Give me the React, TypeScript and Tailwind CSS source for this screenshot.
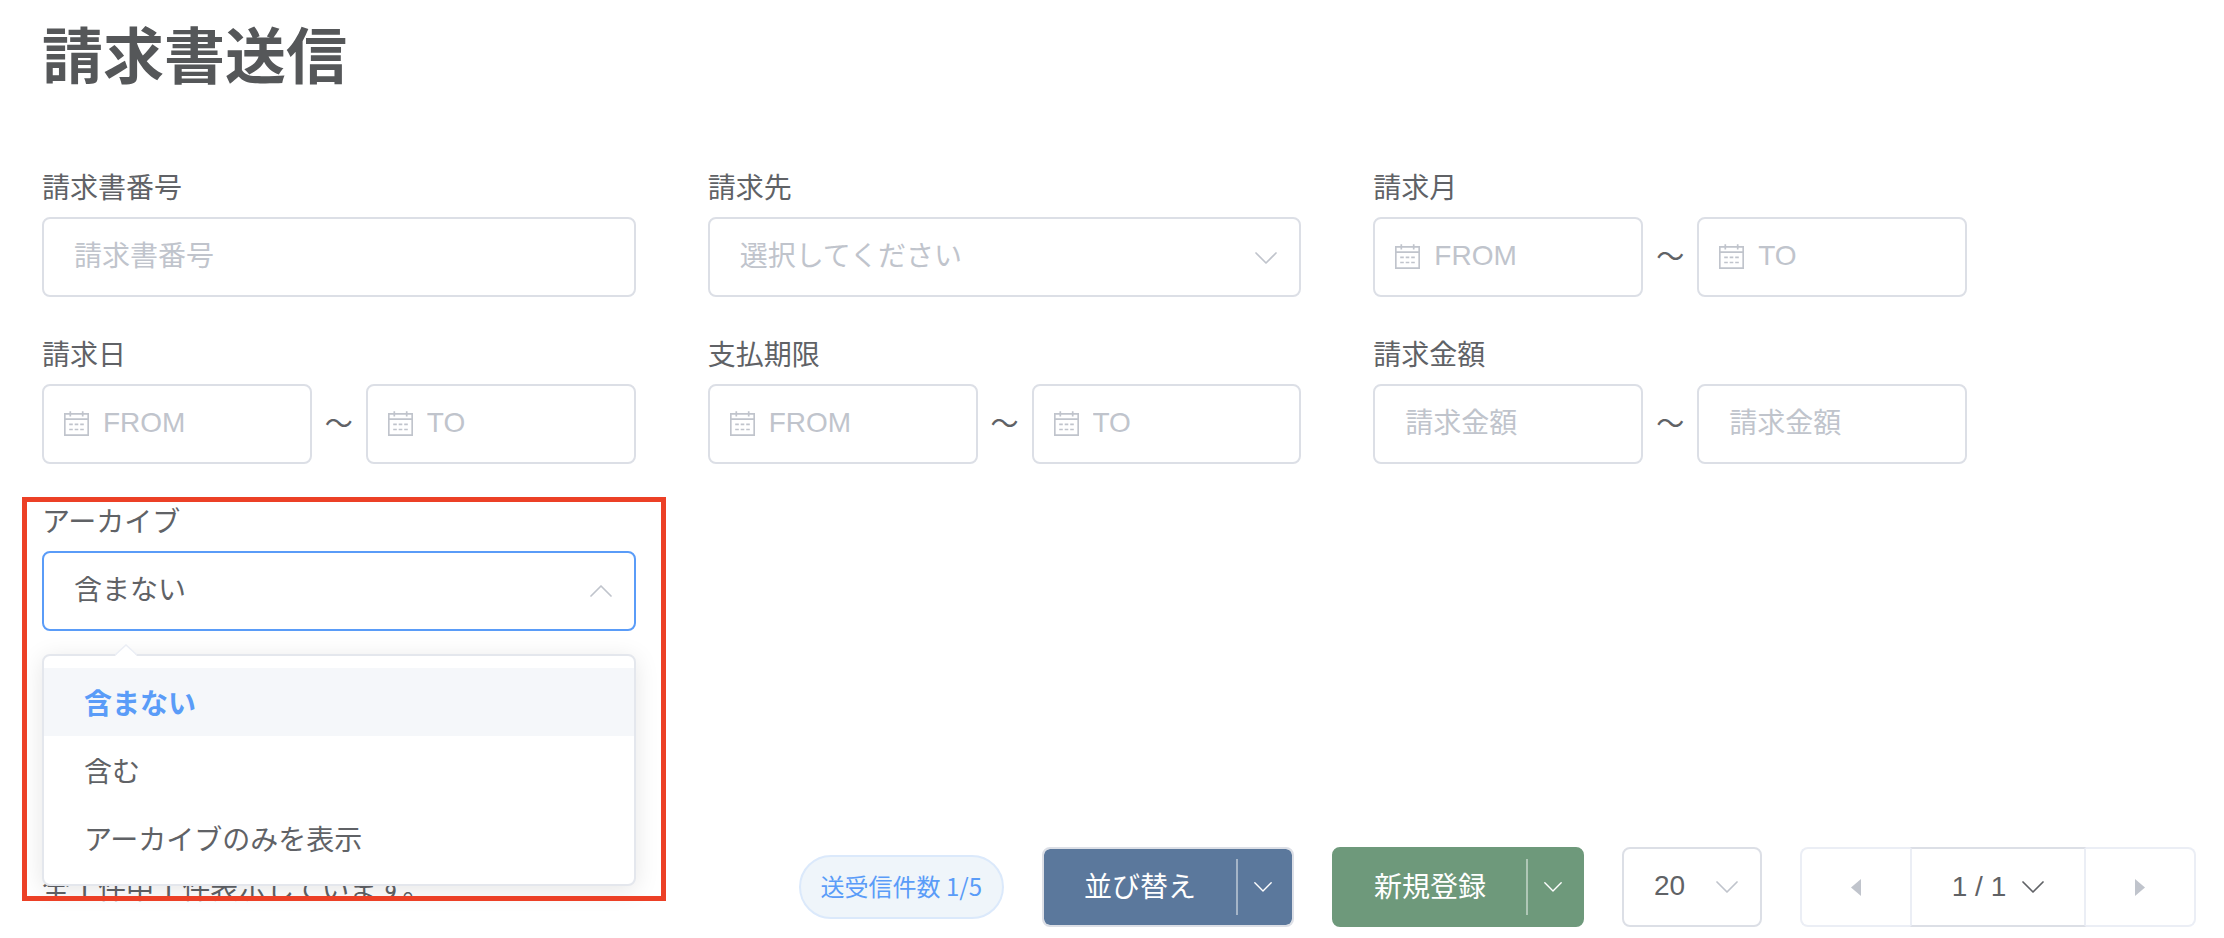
import { useState, type ReactNode } from "react";
import clsx from "clsx";

const textFont = "font-['Noto_Sans_CJK_JP','Noto_Sans',sans-serif]";
const controlFont = "font-['Liberation_Sans','Noto_Sans_CJK_JP',sans-serif]";

const box =
  "h-20 w-full min-w-0 rounded-lg border-2 bg-white text-[28px] outline-none";
const placeholderText =
  "placeholder:text-[#c0c4cc] placeholder:opacity-100";
const textInput = clsx(
  box,
  placeholderText,
  "block border-[#dcdfe6] px-[30px] pb-1.5"
);
const selectInput = clsx(box, "block appearance-none pl-[30px] pr-16");

const archiveOptions = ["含まない", "含む", "アーカイブのみを表示"];

function Chevron({ className, up }: { className?: string; up?: boolean }) {
  return (
    <svg
      viewBox="0 0 22 12"
      fill="none"
      stroke="currentColor"
      strokeWidth={1.7}
      strokeLinecap="round"
      strokeLinejoin="round"
      aria-hidden="true"
      className={clsx("pointer-events-none shrink-0", className)}
    >
      <path d={up ? "M1 11 11 1l10 10" : "M1 1l10 10L21 1"} />
    </svg>
  );
}

function CalendarIcon() {
  return (
    <svg
      viewBox="0 0 25 25"
      fill="none"
      stroke="currentColor"
      strokeWidth={1.7}
      aria-hidden="true"
      className="w-[25px] shrink-0 text-[#c0c4cc]"
    >
      <path d="M.8 2.8h23.4v21.4H.8zM.8 8.2h23.4" />
      <path d="M6.3.2v5.4M18.7.2v5.4" />
      <path d="M5.2 13.3h3.6M10.7 13.3h3.6M16.2 13.3h3.6M5.2 18.5h3.6M10.7 18.5h3.6M16.2 18.5h3.6" />
    </svg>
  );
}

function Field({
  id,
  label,
  children,
}: {
  id: string;
  label: string;
  children: ReactNode;
}) {
  return (
    <div>
      <label htmlFor={id} className="flex h-[60px] items-center pb-0.5">
        {label}
      </label>
      {children}
    </div>
  );
}

function DateInput({
  id,
  placeholder,
  label,
}: {
  id: string;
  placeholder: string;
  label?: string;
}) {
  return (
    <div
      className={clsx(
        box,
        "flex flex-1 items-center gap-3.5 border-[#dcdfe6] px-5 pb-0.5"
      )}
    >
      <CalendarIcon />
      <input
        id={id}
        type="text"
        aria-label={label}
        placeholder={placeholder}
        className={clsx(
          "w-full min-w-0 outline-none",
          placeholderText,
          controlFont
        )}
      />
    </div>
  );
}

function Range({ children }: { children: ReactNode }) {
  return <div className="flex items-center">{children}</div>;
}

function Tilde() {
  return <span className="w-[54px] shrink-0 pb-1 text-center">〜</span>;
}

function DateRange({ id, label }: { id: string; label: string }) {
  return (
    <Field id={id} label={label}>
      <Range>
        <DateInput id={id} placeholder="FROM" />
        <Tilde />
        <DateInput id={`${id}-to`} placeholder="TO" label={`${label} TO`} />
      </Range>
    </Field>
  );
}

function SplitButton({
  children,
  className,
}: {
  children: ReactNode;
  className?: string;
}) {
  return (
    <button
      type="button"
      className={clsx(
        "flex h-20 w-[252px] items-center rounded-lg border-2 text-white",
        className
      )}
    >
      <span className="flex-1 pb-1 pl-10 text-left">{children}</span>
      <span className="flex h-14 w-14 items-center justify-center border-l-2 border-white/45 pr-1">
        <Chevron className="w-[18px]" />
      </span>
    </button>
  );
}

function ArchiveField() {
  const [archive, setArchive] = useState(archiveOptions[0]);

  return (
    <div className="relative">
      <Field id="archive" label="アーカイブ">
        <div className="relative">
          <select
            id="archive"
            value={archive}
            onChange={(e) => setArchive(e.target.value)}
            className={clsx(selectInput, "border-[#5a9cf8] pb-1.5")}
          >
            {archiveOptions.map((option) => (
              <option key={option}>{option}</option>
            ))}
          </select>
          <Chevron
            up
            className="absolute right-6 top-[34px] w-[22px] text-[#c0c4cc]"
          />

          {/* Option panel */}
          <div className="absolute inset-x-0 top-[103px] z-10 rounded-lg border-2 border-[#e4e7ed] bg-white py-3 shadow-[0_4px_24px_rgba(0,0,0,0.1)]">
            <svg
              viewBox="0 0 22 12"
              aria-hidden="true"
              className="absolute -top-3 left-[71px] w-[22px]"
            >
              <path d="M0 12 11 1l11 11z" fill="#fff" />
              <path
                d="M0 11 11 1l11 10"
                fill="none"
                stroke="#ebeef5"
                strokeWidth={1.5}
              />
            </svg>
            <ul role="listbox" aria-label="アーカイブ">
              {archiveOptions.map((option) => (
                <li
                  key={option}
                  role="option"
                  aria-selected={option === archive}
                  onClick={() => setArchive(option)}
                  className={clsx(
                    "flex h-[68px] cursor-pointer items-center px-10",
                    option === archive && "bg-[#f5f7fa] font-bold text-[#5a9cf8]"
                  )}
                >
                  {option}
                </li>
              ))}
            </ul>
          </div>
        </div>
      </Field>

      {/* Highlight frame */}
      <div className="pointer-events-none absolute -left-5 -right-[30px] top-1.5 z-20 h-[404px] border-5 border-[#ec4026]" />
    </div>
  );
}

export default function App() {
  return (
    <main
      className={clsx("bg-white pb-2.5 text-[28px] text-[#606266]", textFont)}
    >
      <h1 className="mb-[49px] pb-6 pl-[42px] pt-[22px] text-[61px] font-bold leading-[62px] text-[#555759]">
        請求書送信
      </h1>

      <form className="grid grid-cols-1 gap-x-[72px] gap-y-[27px] pl-[42px] pr-[257px] lg:grid-cols-3">
        <Field id="number" label="請求書番号">
          <input
            id="number"
            type="text"
            placeholder="請求書番号"
            className={textInput}
          />
        </Field>

        <Field id="client" label="請求先">
          <div className="relative">
            <select
              id="client"
              defaultValue=""
              className={clsx(
                selectInput,
                "border-[#dcdfe6] pb-1.5 text-[#c0c4cc]"
              )}
            >
              <option value="">選択してください</option>
            </select>
            <Chevron className="absolute right-6 top-[35px] w-[22px] text-[#c0c4cc]" />
          </div>
        </Field>

        <DateRange id="month" label="請求月" />
        <DateRange id="date" label="請求日" />
        <DateRange id="due" label="支払期限" />

        <Field id="amount" label="請求金額">
          <Range>
            <input
              id="amount"
              type="text"
              placeholder="請求金額"
              className={clsx(textInput, "flex-1")}
            />
            <Tilde />
            <input
              type="text"
              aria-label="請求金額 上限"
              placeholder="請求金額"
              className={clsx(textInput, "flex-1")}
            />
          </Range>
        </Field>

        <ArchiveField />
      </form>

      <div className="mt-[216px] flex items-center justify-between pl-[42px] pr-7">
        <p>全 1 件中 1 件表示しています。</p>

        <div className="flex items-center gap-[38px]">
          <span className="flex h-16 items-center rounded-full border-2 border-[#dbe9fb] bg-[#eff5fa] px-5 pb-0.5 text-2xl text-[#5a9cf8]">
            送受信件数 1/5
          </span>

          <SplitButton className="border-[#dcdfe6] bg-[#5b789c] bg-clip-padding">
            並び替え
          </SplitButton>
          <SplitButton className="border-[#6e997b] bg-[#6e997b]">
            新規登録
          </SplitButton>

          <div className="relative w-[140px]">
            <select
              aria-label="表示件数"
              className={clsx(
                selectInput,
                "border-[#dcdfe6] pb-0.5",
                controlFont
              )}
            >
              <option>20</option>
            </select>
            <Chevron className="absolute right-6 top-[34px] w-[22px] text-[#c0c4cc]" />
          </div>

          <nav
            aria-label="ページ"
            className={clsx("flex h-20", controlFont)}
          >
            <button
              type="button"
              disabled
              aria-label="前のページ"
              className="flex w-[110px] items-center justify-center rounded-l-lg border-2 border-r-0 border-[#ebeef5] text-[#c0c4cc]"
            >
              <svg viewBox="0 0 10 17" className="w-2.5" aria-hidden="true">
                <path d="M10 0v17L0 8.5z" fill="currentColor" />
              </svg>
            </button>
            <button
              type="button"
              className="flex w-44 items-center justify-center gap-4 border-2 border-x-[#ebeef5] border-y-[#dcdfe6]"
            >
              1 / 1
              <Chevron className="w-[22px]" />
            </button>
            <button
              type="button"
              disabled
              aria-label="次のページ"
              className="flex w-[110px] items-center justify-center rounded-r-lg border-2 border-l-0 border-[#ebeef5] text-[#c0c4cc]"
            >
              <svg viewBox="0 0 10 17" className="w-2.5" aria-hidden="true">
                <path d="M0 0v17l10-8.5z" fill="currentColor" />
              </svg>
            </button>
          </nav>
        </div>
      </div>
    </main>
  );
}
